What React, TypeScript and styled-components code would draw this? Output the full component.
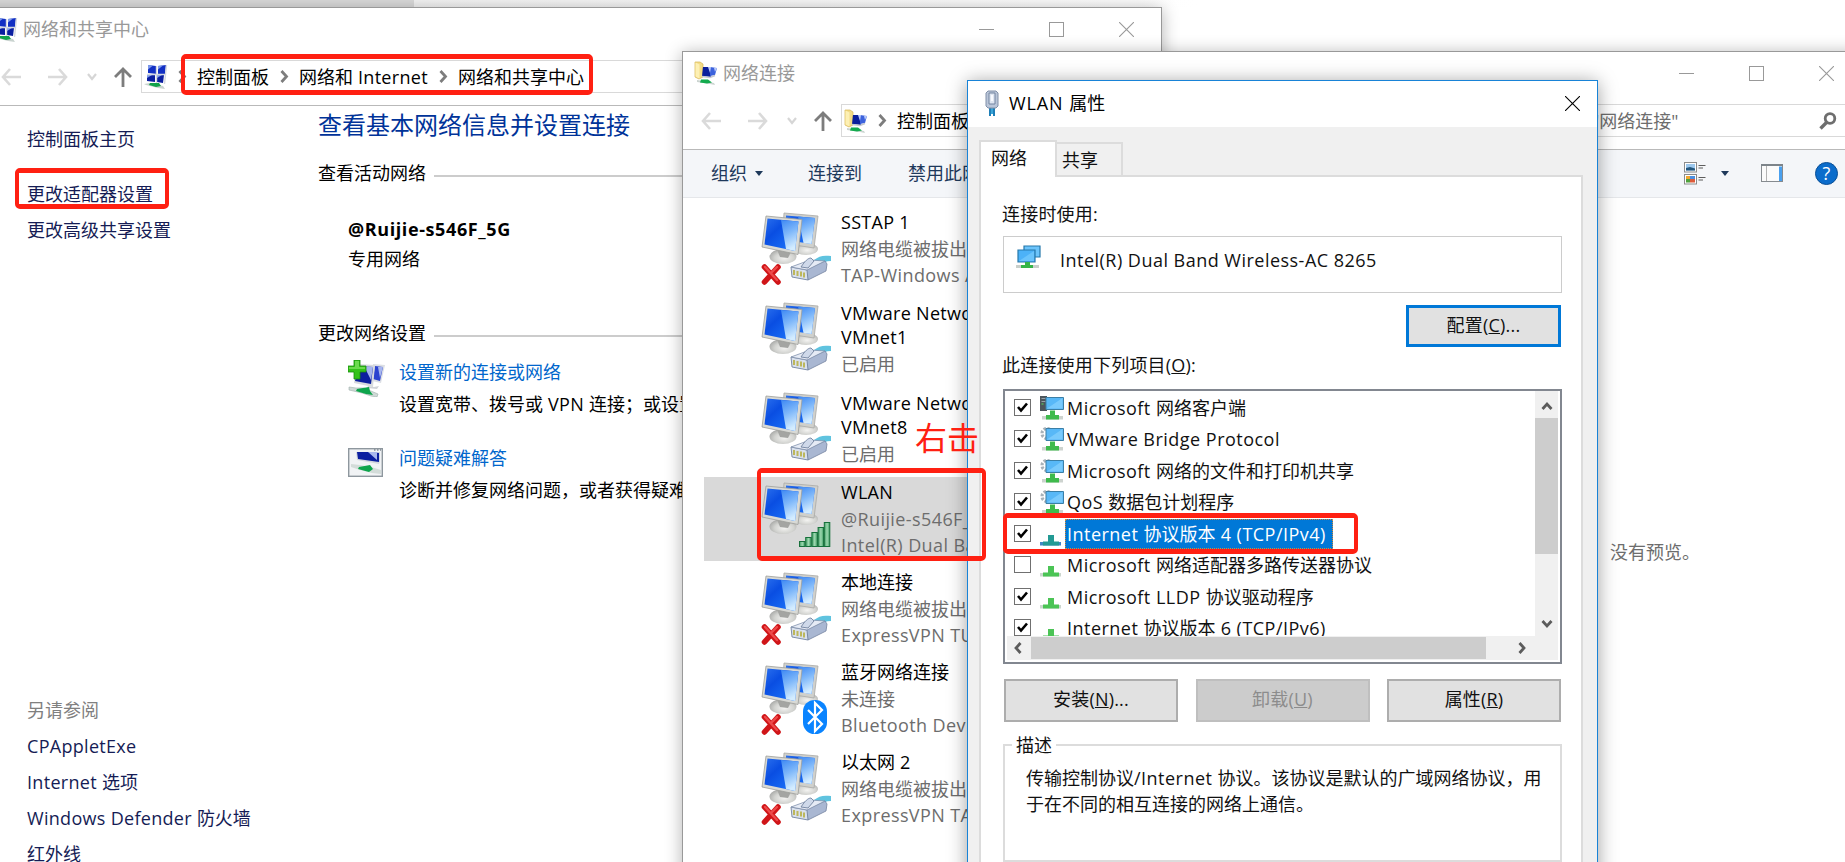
import React from 'react';
import styled, { createGlobalStyle, css } from 'styled-components';

type Overlay = 'plug' | 'signal' | 'bluetooth';
type ItemIcon = 'client' | 'service' | 'protocol';

interface Connection {
  name: string[];
  details: string[];
  overlay: Overlay;
  disconnected?: boolean;
  selected?: boolean;
}

interface BoundItem {
  label: string;
  icon: ItemIcon;
  checked: boolean;
  selected?: boolean;
}

const connections: Connection[] = [
  {
    name: ['SSTAP 1'],
    details: ['网络电缆被拔出', 'TAP-Windows Adapter V9'],
    overlay: 'plug',
    disconnected: true,
  },
  {
    name: ['VMware Network Adapter', 'VMnet1'],
    details: ['已启用'],
    overlay: 'plug',
  },
  {
    name: ['VMware Network Adapter', 'VMnet8'],
    details: ['已启用'],
    overlay: 'plug',
  },
  {
    name: ['WLAN'],
    details: ['@Ruijie-s546F_5G', 'Intel(R) Dual Band Wireless-AC'],
    overlay: 'signal',
    selected: true,
  },
  {
    name: ['本地连接'],
    details: ['网络电缆被拔出', 'ExpressVPN TUN Driver'],
    overlay: 'plug',
    disconnected: true,
  },
  {
    name: ['蓝牙网络连接'],
    details: ['未连接', 'Bluetooth Device (Personal)'],
    overlay: 'bluetooth',
    disconnected: true,
  },
  {
    name: ['以太网 2'],
    details: ['网络电缆被拔出', 'ExpressVPN TAP Adapter'],
    overlay: 'plug',
    disconnected: true,
  },
];

const boundItems: BoundItem[] = [
  { label: 'Microsoft 网络客户端', icon: 'client', checked: true },
  { label: 'VMware Bridge Protocol', icon: 'service', checked: true },
  { label: 'Microsoft 网络的文件和打印机共享', icon: 'service', checked: true },
  { label: 'QoS 数据包计划程序', icon: 'service', checked: true },
  {
    label: 'Internet 协议版本 4 (TCP/IPv4)',
    icon: 'protocol',
    checked: true,
    selected: true,
  },
  {
    label: 'Microsoft 网络适配器多路传送器协议',
    icon: 'protocol',
    checked: false,
  },
  { label: 'Microsoft LLDP 协议驱动程序', icon: 'protocol', checked: true },
  { label: 'Internet 协议版本 6 (TCP/IPv6)', icon: 'protocol', checked: true },
];

const seeAlso = ['CPAppletExe', 'Internet 选项', 'Windows Defender 防火墙', '红外线'];

/* ---------- icons ---------- */

const SharingIcon = () => (
  <svg width="24" height="25" viewBox="1 1 24 25" preserveAspectRatio="none">
    <path d="M5 2l8 1v8l-8-1z M15 3l8-1-1 9-7 0z" fill="#1230c4" />
    <path d="M4 12l8 0v7l-8-1z M14 12l7 0-1 8-6-1z" fill="#0b1fa0" />
    <path d="M5 2l5 .6-5 4z M15 3l5-.6-5 4z M4 12h5l-5 3z M14 12h5l-5 3z" fill="#7f9bea" />
    <path d="M13.500 3v17M4 11.500h18M23.500 2l-2 19" stroke="#d5d9e0" strokeWidth="1.400" />
    <path d="M1 21l6-1 13 3 2 3-7-1-12-3z" fill="#c9d3cf" />
    <path d="M7 20l9 0 2 3-5 1-7-2z" fill="#12a34a" />
  </svg>
);

const FolderNetIcon = () => (
  <svg width="24" height="24" viewBox="0 0 24 24">
    <path d="M1 1h5l3 2v13l-4 2-4-2z" fill="#f3dc88" stroke="#d6b455" strokeWidth=".7" />
    <path d="M1.500 1.500l4 2v14l-4-2z" fill="#fdf0b4" />
    <path d="M9 6l8 0 0 10-9-1z" fill="#0a1f9c" />
    <path d="M16 6l7 1-2 7-5 1z" fill="#3c62dc" />
    <path d="M14 6l3 0-1 6z M20 7l3 0-2 4z" fill="#b8c9fa" />
    <path d="M8 15.500l8 1 5-2" stroke="#c4c8d0" strokeWidth="1.400" fill="none" />
    <path d="M3 19l17 3 1 2-5-1-13-2z" fill="#cbd4d0" />
    <path d="M7 18.500l7 0 4 3-5 1-7-1z" fill="#13ab4e" />
  </svg>
);

const NewConnectionIcon = () => (
  <svg width="37" height="37" viewBox="0 0 37 37">
    <path d="M25 4l12 1-4 18-9-2z" fill="#dcdfe4" />
    <path d="M27 6l8 1-3 14-7-2z" fill="#2c43cf" />
    <path d="M9 4l18 1-2 22L6 23z" fill="#d7dade" />
    <path d="M11 6l14 1-2 17L7 21z" fill="#0c1f9f" />
    <path d="M16 6l9 1-2 13z M30 7l5 0-3 11z" fill="#a7b6ee" />
    <path d="M20 26l6 1 5-1-2 3-10-1z" fill="#d0d3d8" />
    <path d="M1 27l7 1 8 0 14 6-1 3-6-1-9-3-13-3z" fill="#cfd9d6" stroke="#9fb0ab" strokeWidth=".6" />
    <path d="M9 29l12-2 1 4 3 4-7-1-10-3z" fill="#0ea54c" />
    <path d="M6 0h6v6h6v6h-6v7H6v-7H0V6h6z" fill="#35c21a" stroke="#188a0c" strokeWidth=".8" />
    <path d="M7 1h4v6h6v2H1V7h6z" fill="#85e565" opacity=".7" />
  </svg>
);

const TroubleshootIcon = () => (
  <svg width="35" height="29" viewBox="0 0 35 29">
    <rect x=".7" y=".7" width="33.6" height="27.6" fill="#f1f3f5" stroke="#8e979e" strokeWidth="1.4" />
    <path d="M26 2h1.500M29 2h1.500M32 2h1" stroke="#4e5a66" />
    <path d="M8 4h24v9l-1 3L9 12z" fill="#d4d8de" />
    <path d="M9 4h12l10 1v9L10 11z" fill="#0c1fa0" />
    <path d="M20 4h9l0 8z" fill="#aab8ee" />
    <path d="M3 16l9 1 11 2 10 3v4l-9-1-12-3-9-3z" fill="#d3dcd9" />
    <path d="M11 19l11-2 3 4-4 3-11-3z" fill="#0ea54c" />
  </svg>
);

const AdapterIcon = () => (
  <svg width="14" height="26" viewBox="0 0 14 26">
    <path d="M4 15h6v9H4z" fill="#3aa5d8" />
    <path d="M5 17v9M9 17v9" stroke="#1f7fb8" strokeWidth="2" />
    <path d="M3 1h8l2 2v13l-2 2H3l-2-2V3z" fill="#b9c5d8" stroke="#8190a8" />
    <path d="M4 3h6v11H4z" fill="#dfe6f1" stroke="#7384a0" />
    <path d="M7 5v6" stroke="#f8faff" strokeWidth="2" />
  </svg>
);

const BackIcon = () => (
  <svg width="20" height="18" viewBox="0 0 20 18">
    <path d="M9 1L2 9l7 8M2 9h18" fill="none" stroke="#dadada" strokeWidth="2.600" />
  </svg>
);

const ForwardIcon = () => (
  <svg width="20" height="18" viewBox="0 0 20 18">
    <path d="M11 1l7 8-7 8M0 9h18" fill="none" stroke="#dadada" strokeWidth="2.600" />
  </svg>
);

const UpIcon = () => (
  <svg width="18" height="20" viewBox="0 0 18 20">
    <path d="M1 10l8-8 8 8M9 2v18" fill="none" stroke="#7d7d7d" strokeWidth="2.800" />
  </svg>
);

const DownChevron = () => (
  <svg width="10" height="8" viewBox="0 0 10 8">
    <path d="M1 1l4 5 4-5" fill="none" stroke="#d6d6d6" strokeWidth="2.200" />
  </svg>
);

const CrumbChevron = () => (
  <svg width="9" height="13" viewBox="0 0 9 13">
    <path d="M1.500 1l5 5.500-5 5.500" fill="none" stroke="#7d7d7d" strokeWidth="2.800" />
  </svg>
);

const SearchIcon = () => (
  <svg width="18" height="18" viewBox="0 0 18 18">
    <circle cx="11" cy="6.500" r="4.800" fill="none" stroke="#6e6e6e" strokeWidth="2.800" />
    <path d="M7.500 10.500L1.500 16.500" stroke="#6e6e6e" strokeWidth="3.400" />
  </svg>
);

const MinimizeIcon = () => (
  <svg width="15" height="15" viewBox="0 0 15 15">
    <path d="M0 7.500h15" stroke="currentColor" />
  </svg>
);

const MaximizeIcon = () => (
  <svg width="15" height="15" viewBox="0 0 15 15">
    <rect x=".5" y=".5" width="14" height="14" fill="none" stroke="currentColor" />
  </svg>
);

const CloseIcon = () => (
  <svg width="15" height="15" viewBox="0 0 15 15">
    <path d="M0 0l15 15M15 0L0 15" stroke="currentColor" strokeWidth="1.100" />
  </svg>
);

const ViewIcon = () => (
  <svg width="22" height="23" viewBox="0 0 22 23">
    <rect x=".5" y=".5" width="12" height="9.500" fill="#fff" stroke="#8b8b8b" />
    <rect x="2" y="2" width="9" height="6.500" fill="#9cc8ee" />
    <path d="M2 6l4-1 5 1.500v2H2z" fill="#23577e" />
    <rect x=".5" y="12.500" width="12" height="9.500" fill="#fff" stroke="#8b8b8b" />
    <path d="M2 14h4v3H2z" fill="#f0a52c" />
    <path d="M6 14h5v3H6z" fill="#4b8fe0" />
    <path d="M2 17h4v3.500H2z" fill="#4ea13c" />
    <path d="M6 17h5v3.500H6z" fill="#dd5b3a" />
    <path d="M14.500 3.500h7M14.500 6h4.500M14.500 15.500h7M14.500 18h4.500" stroke="#5d5d5d" />
  </svg>
);

const PaneIcon = () => (
  <svg width="22" height="18" viewBox="0 0 22 18">
    <rect x=".5" y=".5" width="21" height="17" fill="#fbfbfb" stroke="#868b90" />
    <path d="M0 1h22" stroke="#7d848a" strokeWidth="2" />
    <path d="M5.500 2v15" stroke="#b4b4b4" />
    <rect x="18" y="2.500" width="3" height="14.500" fill="#4aa0ee" />
  </svg>
);

const Caret = () => (
  <svg width="8" height="5" viewBox="0 0 8 5">
    <path d="M0 0h8L4 5z" fill="#1e395b" />
  </svg>
);

const WiredIcon = () => (
  <svg width="25" height="24" viewBox="0 0 25 24">
    <path d="M8 1h16v11H8z" fill="#6cc4fb" stroke="#2678ab" strokeWidth="1.200" />
    <path d="M2 5h17v12H2z" fill="#4cb2f8" stroke="#2678ab" strokeWidth="1.200" />
    <path d="M3 16L18 6v10z" fill="#7fd0ff" opacity=".6" />
    <path d="M0 20h23v3H0z" fill="#c9cfcb" />
    <path d="M9 17h5v3h3v3H5v-3h4z" fill="#36b548" />
  </svg>
);

const BoundIcon = ({ kind, active }: { kind: ItemIcon; active?: boolean }) => (
  <svg width="24" height="26" viewBox="0 0 24 26">
    {kind === 'client' && (
      <>
        <path d="M0 1h7v15H0z" fill="#4d565c" />
        <path d="M1.500 3.500h4M1.500 6.500h4" stroke="#98a3aa" />
        <path d="M1.500 9h2" stroke="#59e05a" />
      </>
    )}
    {kind === 'service' && (
      <circle
        cx="7"
        cy="7.500"
        r="5"
        fill="none"
        stroke="#a7b1b8"
        strokeWidth="3.200"
        strokeDasharray="2.400 1.500"
      />
    )}
    {kind === 'protocol' ? (
      <>
        <path d="M0 21h21v3.500H0z" fill={active ? '#3f87c4' : '#ccd6cf'} />
        <path d="M8 14h6v6.500h5v4H3v-4h5z" fill={active ? '#239a94' : '#4bc455'} />
      </>
    ) : (
      <>
        <path d="M6 2.500h17.500v12H6z" fill="#58b8f7" stroke="#3b7fa6" />
        <path d="M7 13.500L22.500 3v10.500z" fill="#8fd5ff" opacity=".6" />
        <path d="M2 21h21v3.500H2z" fill="#cdd3cf" />
        <path d="M10 15.500h5v4.500h4v4.500H6v-4.500h4z" fill="#3fba4c" />
      </>
    )}
  </svg>
);

const ConnectionIcon = ({ overlay, disconnected }: { overlay: Overlay; disconnected?: boolean }) => (
  <svg width="70" height="84" viewBox="0 0 70 84" overflow="visible">
    <defs>
      <linearGradient id="screen" x1="0" y1="0" x2="1" y2="1">
        <stop offset="0" stopColor="#2a70ee" />
        <stop offset=".35" stopColor="#0a4ee2" />
        <stop offset="1" stopColor="#1f7cff" />
      </linearGradient>
      <linearGradient id="shine" x1="0" y1="0" x2=".3" y2="1">
        <stop offset="0" stopColor="#3d88f3" />
        <stop offset=".5" stopColor="#7fb8fa" />
        <stop offset="1" stopColor="#d3ecff" />
      </linearGradient>
      <radialGradient id="base" cx=".55" cy=".6" r=".6">
        <stop offset="0" stopColor="#f4f4f2" />
        <stop offset=".6" stopColor="#d2d3d0" />
        <stop offset="1" stopColor="#a9aaa8" />
      </radialGradient>
      <linearGradient id="bar" x1="0" y1="0" x2="1" y2="0">
        <stop offset="0" stopColor="#3e9c62" />
        <stop offset=".5" stopColor="#9ed8b0" />
        <stop offset="1" stopColor="#3e9c62" />
      </linearGradient>
    </defs>
    <ellipse cx="44" cy="42" rx="12" ry="6" fill="url(#base)" />
    <path d="M22 6l34 3-4 32-32-5z" fill="#cfd0cc" stroke="#a9aaa7" strokeWidth=".8" />
    <path d="M24 8.500l29 2.500-3.500 26L24 33z" fill="url(#screen)" />
    <path d="M36 9.500l17 1.500-3.500 26-8-1z" fill="url(#shine)" />
    <ellipse cx="21" cy="49.500" rx="13.500" ry="7.500" fill="url(#base)" />
    <path d="M14 40l16 3-4 8-8-1z" fill="#a4a5a2" />
    <path d="M4 9l36 3.500-4 35L0 40z" fill="#d8d9d5" stroke="#9d9e9b" strokeWidth=".8" />
    <path d="M5.500 11.500l31 3-3.500 29.500L2.500 37.500z" fill="url(#screen)" />
    <path d="M19 13l17.500 1.500-3.500 29.500-9-2z" fill="url(#shine)" />
    {disconnected && (
      <g>
        <path d="M2.500 60l13.500 15M16 60L2.500 75" stroke="#d01518" strokeWidth="5.600" strokeLinecap="round" />
        <path d="M3 60l12 13M15 60l-5 5" stroke="#ee4a4a" strokeWidth="2.400" strokeLinecap="round" />
      </g>
    )}
    {overlay === 'plug' && (
      <g>
        <path d="M52 53c5-4 9-5 17-4v5c-5 0-9 2-14 5z" fill="#5fc3df" />
        <path d="M44 63l19-9 2 3-1 7-18 9z" fill="#a9b7d2" stroke="#73839f" strokeWidth=".8" />
        <path d="M29 60l16 3 1 10-16-3z" fill="#d9e0ec" stroke="#73839f" strokeWidth=".9" />
        <path d="M29 60l19-7 15 1-18 9z" fill="#e6ebf5" stroke="#8090ac" strokeWidth=".8" />
        <path d="M32 63v5M35.500 64v5M39 64.500v5M42 65.500v5" stroke="#bdb75c" strokeWidth="2" />
        <path d="M39 60c4-6 7-9 10-9l3 3-6 7z" fill="#cfd9ea" stroke="#73839f" strokeWidth=".9" />
      </g>
    )}
    {overlay === 'signal' &&
      [5, 9, 14, 19, 24].map((height, index) => (
        <rect
          key={height}
          x={37.5 + index * 6.2}
          y={69.5 - height}
          width="5.500"
          height={height}
          fill="url(#bar)"
          stroke="#17703b"
        />
      ))}
    {overlay === 'bluetooth' && (
      <g>
        <rect x="41" y="43" width="24" height="34" rx="11.500" fill="#0a84ff" />
        <path d="M46 53l14 14-7 7V46l7 7-14 14" fill="none" stroke="#fff" strokeWidth="2.200" />
      </g>
    )}
  </svg>
);

const ScrollArrow = ({ d }: { d: string }) => (
  <svg width="12" height="12" viewBox="0 0 12 12">
    <path d={d} fill="none" stroke="#5c5c5c" strokeWidth="2.800" />
  </svg>
);

const mixed = (text: string) =>
  text
    .split(/([\x20-\x7e]+)/)
    .filter(Boolean)
    .map((run, index) => (/^[\x20-\x7e]+$/.test(run) ? <Latin key={index}>{run}</Latin> : run));

const WindowButtons = () => (
  <ButtonStrip>
    <CaptionButton>
      <MinimizeIcon />
    </CaptionButton>
    <CaptionButton>
      <MaximizeIcon />
    </CaptionButton>
    <CaptionButton>
      <CloseIcon />
    </CaptionButton>
  </ButtonStrip>
);

const NavButtons = () => (
  <NavGroup>
    <BackIcon />
    <ForwardIcon />
    <DownChevron />
    <UpIcon />
  </NavGroup>
);

const SharingCenter = () => (
  <Window $left={-18} $top={7}>
    <TitleBar>
      <SharingIcon />
      <WindowTitle>网络和共享中心</WindowTitle>
      <WindowButtons />
    </TitleBar>
    <NavBar>
      <NavButtons />
      <AddressBox>
        <SharingIcon />
        <CrumbChevron />
        <Crumb>控制面板</Crumb>
        <CrumbChevron />
        <Crumb>{mixed('网络和 Internet')}</Crumb>
        <CrumbChevron />
        <Crumb>网络和共享中心</Crumb>
      </AddressBox>
    </NavBar>
    <SharingBody>
      <Sidebar>
        <SideLink>控制面板主页</SideLink>
        <TaskLinks>
          <SideLink>更改适配器设置</SideLink>
          <SideLink>更改高级共享设置</SideLink>
        </TaskLinks>
        <SeeAlso>
          <SeeAlsoTitle>另请参阅</SeeAlsoTitle>
          {seeAlso.map((item) => (
            <SideLink key={item}>{mixed(item)}</SideLink>
          ))}
        </SeeAlso>
      </Sidebar>
      <Main>
        <Heading>查看基本网络信息并设置连接</Heading>
        <SectionTitle $gap={17}>查看活动网络</SectionTitle>
        <ActiveNetwork>
          <strong>@Ruijie-s546F_5G</strong>
          <span>专用网络</span>
        </ActiveNetwork>
        <SectionTitle $gap={48}>更改网络设置</SectionTitle>
        <SettingRow>
          <NewConnectionIcon />
          <div>
            <SettingLink>设置新的连接或网络</SettingLink>
            <SettingText>{mixed('设置宽带、拨号或 VPN 连接；或设置路由器或接入点。')}</SettingText>
          </div>
        </SettingRow>
        <SettingRow>
          <TroubleshootIcon />
          <div>
            <SettingLink>问题疑难解答</SettingLink>
            <SettingText>诊断并修复网络问题，或者获得疑难解答信息。</SettingText>
          </div>
        </SettingRow>
      </Main>
    </SharingBody>
  </Window>
);

const ConnectionsWindow = () => (
  <Window $left={682} $top={51}>
    <TitleBar>
      <FolderNetIcon />
      <WindowTitle>网络连接</WindowTitle>
      <WindowButtons />
    </TitleBar>
    <NavBar>
      <NavButtons />
      <AddressBox>
        <FolderNetIcon />
        <CrumbChevron />
        <Crumb>控制面板</Crumb>
      </AddressBox>
      <SearchBox>
        <span>搜索"网络连接"</span>
        <SearchIcon />
      </SearchBox>
    </NavBar>
    <Toolbar>
      <ToolButton $width={97}>
        组织 <Caret />
      </ToolButton>
      <ToolButton $width={100}>连接到</ToolButton>
      <ToolButton $width={140}>禁用此网络设备</ToolButton>
      <ToolIcons>
        <ViewIcon />
        <Caret />
        <PaneIcon />
        <HelpBadge>?</HelpBadge>
      </ToolIcons>
    </Toolbar>
    <ConnectionsBody>
      <ConnectionList>
        {connections.map((item, index) => (
          <ConnectionItem key={index} $selected={item.selected}>
            <ConnectionIcon overlay={item.overlay} disconnected={item.disconnected} />
            <ConnectionText $single={item.name.length === 1}>
              {item.name.map((line) => (
                <NameLine key={line}>{mixed(line)}</NameLine>
              ))}
              <Details>
                {item.details.map((line) => (
                  <DetailLine key={line}>{mixed(line)}</DetailLine>
                ))}
              </Details>
            </ConnectionText>
          </ConnectionItem>
        ))}
      </ConnectionList>
      <PreviewPane>没有预览。</PreviewPane>
    </ConnectionsBody>
  </Window>
);

const PropertiesDialog = () => (
  <Dialog>
    <DialogTitle>
      <AdapterIcon />
      <DialogCaption>{mixed('WLAN 属性')}</DialogCaption>
      <CloseIcon />
    </DialogTitle>
    <DialogBody>
      <TabStrip>
        <Tab $active>网络</Tab>
        <Tab>共享</Tab>
      </TabStrip>
      <TabPage>
        <Label $gap={25}>连接时使用:</Label>
        <DeviceBox>
          <WiredIcon />
          <DeviceName>{mixed('Intel(R) Dual Band Wireless-AC 8265')}</DeviceName>
        </DeviceBox>
        <ConfigureButton>
          配置(<u>C</u>)...
        </ConfigureButton>
        <Label $gap={6}>
          此连接使用下列项目(<u>O</u>):
        </Label>
        <ListBox>
          <ItemRows>
            {boundItems.map((item) => (
              <ItemRow key={item.label}>
                <CheckBox>
                  {item.checked && (
                    <svg width="11" height="11" viewBox="0 0 11 11">
                      <path d="M1 5l3 3.500L10 1.500" fill="none" stroke="#000" strokeWidth="2.600" />
                    </svg>
                  )}
                </CheckBox>
                <BoundIcon kind={item.icon} active={item.selected} />
                <ItemLabel $selected={item.selected}>{mixed(item.label)}</ItemLabel>
              </ItemRow>
            ))}
          </ItemRows>
          <VerticalScroll>
            <ScrollArrow d="M1.500 9L6 4l4.500 5" />
            <VerticalThumb />
            <ScrollArrow d="M1.500 3L6 8l4.500-5" />
          </VerticalScroll>
          <HorizontalScroll>
            <ScrollArrow d="M8.500 1L4 6l4.500 5" />
            <HorizontalThumb />
            <ScrollArrow d="M3.500 1L8 6l-4.500 5" />
          </HorizontalScroll>
        </ListBox>
        <ButtonRow>
          <PushButton>
            安装(<u>N</u>)...
          </PushButton>
          <PushButton $disabled>
            卸载(<u>U</u>)
          </PushButton>
          <PushButton>
            属性(<u>R</u>)
          </PushButton>
        </ButtonRow>
        <DescriptionGroup>
          <legend>描述</legend>
          <p>{mixed('传输控制协议/Internet 协议。该协议是默认的广域网络协议，用')}</p>
          <p>于在不同的相互连接的网络上通信。</p>
        </DescriptionGroup>
      </TabPage>
    </DialogBody>
  </Dialog>
);

const App: React.FC = () => {
  return (
    <Desktop>
      <GlobalStyle />
      <BackStrip />
      <SharingCenter />
      <ConnectionsWindow />
      <PropertiesDialog />
      <Marker $x={181} $y={54} $w={412} $h={41} />
      <Marker $x={15} $y={168} $w={154} $h={41} />
      <Marker $x={757} $y={468} $w={229} $h={93} />
      <Marker $x={1003} $y={513} $w={355} $h={41} />
      <MarkerText>右击</MarkerText>
    </Desktop>
  );
};
export default App;

const GlobalStyle = createGlobalStyle`
  * {
    box-sizing: border-box;
  }

  body {
    margin: 0;
    overflow: hidden;
  }

  svg {
    flex: none;
    display: block;
  }
`;

const Desktop = styled.div`
  position: relative;
  width: 1845px;
  height: 862px;
  overflow: hidden;
  background: #fff;
  color: #000;
  font-family: 'Open Sans', 'Noto Sans CJK SC', sans-serif;
  font-size: 18px;
  line-height: 24px;
  white-space: nowrap;
`;

const Latin = styled.span`
  letter-spacing: 0.3px;
  white-space: pre;
`;

const BackStrip = styled.div`
  height: 8px;
  background: linear-gradient(90deg, #dcdcdc 414px, #f5f5f5 414px, #fff 1200px);
`;

const Window = styled.section<{ $left: number; $top: number }>`
  position: absolute;
  left: ${({ $left }) => $left}px;
  top: ${({ $top }) => $top}px;
  width: 1180px;
  height: 900px;
  display: flex;
  flex-direction: column;
  background: #fff;
  border: 1px solid #999;
  box-shadow: 0 2px 16px rgba(0, 0, 0, 0.3);
`;

const TitleBar = styled.header`
  display: flex;
  align-items: center;
  flex: none;
  height: 42px;
  padding-left: 11px;
`;

const WindowTitle = styled.span`
  margin-left: 5px;
  color: #999;
`;

const ButtonStrip = styled.div`
  display: flex;
  margin-left: auto;
  color: #999;
`;

const CaptionButton = styled.div`
  width: 70px;
  padding-left: 28px;
`;

const NavBar = styled.nav`
  display: flex;
  align-items: center;
  flex: none;
  height: 56px;
  padding: 0 14px 2px 18px;
  border-bottom: 1px solid #b9b9b9;
`;

const NavGroup = styled.div`
  display: flex;
  align-items: center;
  width: 140px;

  svg:nth-child(2) {
    margin-left: 27px;
  }

  svg:nth-child(3) {
    margin-left: 19px;
  }

  svg:nth-child(4) {
    margin-left: 17px;
  }
`;

const AddressBox = styled.div`
  display: flex;
  align-items: center;
  flex: 1;
  gap: 10px;
  height: 33px;
  padding-left: 2px;
  border: 1px solid #d9d9d9;
`;

const Crumb = styled.span`
  margin-right: 1px;
`;

const SearchBox = styled.div`
  display: flex;
  align-items: center;
  justify-content: space-between;
  width: 300px;
  height: 33px;
  margin-left: 14px;
  padding: 0 9px 0 8px;
  border: 1px solid #d9d9d9;
  color: #6d6d6d;
`;

const SharingBody = styled.div`
  display: flex;
  flex: 1;
`;

const Sidebar = styled.aside`
  width: 335px;
  padding: 15px 0 0 44px;
  line-height: 36px;
  color: #151c55;
`;

const SideLink = styled.div`
  height: 36px;
`;

const TaskLinks = styled.div`
  margin-top: 19px;
`;

const SeeAlso = styled.div`
  margin-top: 444px;
`;

const SeeAlsoTitle = styled.div`
  height: 36px;
  color: #808080;
`;

const Main = styled.main`
  flex: 1;
`;

const Heading = styled.h1`
  margin: 0;
  font-size: 24px;
  font-weight: 400;
  line-height: 38px;
  color: #003399;
`;

const SectionTitle = styled.h2<{ $gap: number }>`
  display: flex;
  align-items: center;
  gap: 8px;
  margin: ${({ $gap }) => $gap}px 0 0;
  font-size: 18px;
  font-weight: 400;

  &::after {
    content: '';
    flex: 1;
    height: 2px;
    margin-top: 5px;
    background: #ccc;
  }
`;

const ActiveNetwork = styled.div`
  display: flex;
  flex-direction: column;
  gap: 2px;
  margin-top: 30px;
  padding-left: 30px;
  line-height: 28px;

  strong {
    font-weight: 700;
    letter-spacing: 0.6px;
  }
`;

const SettingRow = styled.div`
  display: flex;
  margin-top: 15px;
  padding-left: 30px;

  > div {
    margin-left: 14px;
  }

  & + & {
    margin-top: 32px;
  }

  & + & > div {
    margin: -2px 0 0 16px;
  }
`;

const SettingLink = styled.div`
  color: #0066cc;
`;

const SettingText = styled.div`
  margin-top: 8px;
`;

const Toolbar = styled.div`
  display: flex;
  align-items: center;
  flex: none;
  height: 48px;
  padding: 0 23px 1px 28px;
  background: #f4f6f9;
  border-bottom: 1px solid #e5e7ea;
  color: #1e395b;
`;

const ToolButton = styled.div<{ $width: number }>`
  display: flex;
  align-items: center;
  gap: 8px;
  width: ${({ $width }) => $width}px;
`;

const ToolIcons = styled.div`
  display: flex;
  align-items: center;
  margin-left: auto;
  gap: 32px;

  svg:nth-child(2) {
    margin-left: -17px;
  }
`;

const HelpBadge = styled.div`
  width: 23px;
  height: 23px;
  border: 1px solid #0a4f96;
  border-radius: 50%;
  background: #0b6ccb;
  color: #fff;
  line-height: 20px;
  text-align: center;
`;

const ConnectionsBody = styled.div`
  display: flex;
  flex: 1;
  padding: 9px 0 0 21px;
`;

const ConnectionList = styled.div`
  flex: 1;
  display: flex;
  flex-direction: column;
  gap: 6px;
`;

const ConnectionItem = styled.div<{ $selected?: boolean }>`
  display: flex;
  flex: none;
  width: 330px;
  height: 84px;
  padding-left: 58px;
  background: ${({ $selected }) => ($selected ? '#d9d9d9' : 'transparent')};
`;

const ConnectionText = styled.div<{ $single: boolean }>`
  margin-left: 9px;
  padding-top: ${({ $single }) => ($single ? 3 : 4)}px;
`;

const NameLine = styled.div`
  height: 24px;
`;

const Details = styled.div`
  padding-top: 3px;
  color: #6d6d6d;

  ${Latin} {
    letter-spacing: 0.4px;
  }
`;

const DetailLine = styled.div`
  height: 26px;
`;

const PreviewPane = styled.div`
  width: 251px;
  padding-top: 333px;
  color: #6d6d6d;
`;

const Dialog = styled.section`
  position: absolute;
  left: 967px;
  top: 80px;
  width: 631px;
  height: 860px;
  background: #f0f0f0;
  border: 1px solid #1883d7;
  box-shadow: 0 2px 18px rgba(0, 0, 0, 0.38);
`;

const DialogTitle = styled.header`
  display: flex;
  align-items: center;
  height: 46px;
  padding: 0 17px 2px;
  background: #fff;
`;

const DialogCaption = styled.span`
  margin: 0 auto 0 10px;

  ${Latin} {
    letter-spacing: 0.9px;
  }
`;

const DialogBody = styled.div`
  padding: 13px 14px 0 11px;
  color: #111;

  ${Latin} {
    letter-spacing: 0.48px;
  }
`;

const TabStrip = styled.div`
  display: flex;
  align-items: flex-end;
`;

const Tab = styled.div<{ $active?: boolean }>`
  width: 66px;
  height: 33px;
  padding: 4px 0 0 5px;
  border: 2px solid #dcdcdc;
  border-bottom: 0;
  border-left: 0;
  ${({ $active }) =>
    $active &&
    css`
      z-index: 1;
      width: 78px;
      height: 37px;
      margin-bottom: -2px;
      padding-left: 10px;
      background: #fff;
      border-left: 2px solid #dcdcdc;
    `}
`;

const TabPage = styled.div`
  display: flex;
  flex-direction: column;
  height: 740px;
  padding: 0 19px 0 22px;
  background: #fff;
  border: 2px solid #dcdcdc;
`;

const Label = styled.div<{ $gap: number }>`
  height: 24px;
  margin-top: ${({ $gap }) => $gap}px;
  margin-left: -1px;
  letter-spacing: 0.2px;
`;

const DeviceBox = styled.div`
  display: flex;
  flex: none;
  height: 57px;
  margin-top: 10px;
  padding: 8px 0 0 12px;
  border: 1.5px solid #ccc;
`;

const DeviceName = styled.span`
  margin: 3px 0 0 19px;
`;

const PushButton = styled.div<{ $disabled?: boolean }>`
  flex: none;
  width: 174px;
  height: 43px;
  border: 2px solid ${({ $disabled }) => ($disabled ? '#bfbfbf' : '#adadad')};
  background: ${({ $disabled }) => ($disabled ? '#ccc' : '#e1e1e1')};
  color: ${({ $disabled }) => ($disabled ? '#8c8c8c' : '#111')};
  letter-spacing: 0.2px;
  line-height: 37px;
  text-align: center;
`;

const ConfigureButton = styled(PushButton)`
  width: 155px;
  height: 42px;
  margin: 12px 1px 0 auto;
  border: 3px solid #0078d7;
  line-height: 35px;
`;

const ListBox = styled.div`
  flex: none;
  display: grid;
  grid-template-columns: 1fr 23px;
  grid-template-rows: 245px 1fr;
  height: 275px;
  margin-top: 12px;
  padding: 0 2px 2px;
  border: 2px solid #828790;
`;

const ItemRows = styled.div`
  padding-top: 1px;
  overflow: hidden;
`;

const ItemRow = styled.div`
  display: flex;
  align-items: center;
  height: 31.5px;
  padding-left: 7px;
`;

const CheckBox = styled.div`
  display: flex;
  align-items: center;
  justify-content: center;
  width: 17px;
  height: 17px;
  margin: 0 9px 1px 0;
  border: 1.5px solid #707070;
  background: #fff;
`;

const ItemLabel = styled.span<{ $selected?: boolean }>`
  height: 30px;
  margin-left: 1px;
  padding: 2px 7px 0 2px;
  line-height: 27px;
  ${({ $selected }) =>
    $selected &&
    css`
      background: #0078d7;
      color: #fff;
      outline: 1px dotted #d58a3c;
      outline-offset: -1px;
    `}
`;

const VerticalScroll = styled.div`
  display: flex;
  flex-direction: column;
  align-items: center;
  justify-content: space-between;
  padding: 9px 0 6px;
  background: #f0f0f0;
`;

const VerticalThumb = styled.div`
  width: 23px;
  height: 136px;
  margin: 6px 0 auto;
  background: #cdcdcd;
`;

const HorizontalScroll = styled.div`
  grid-column: 1 / 3;
  display: flex;
  align-items: center;
  padding-left: 5px;
  background: #f0f0f0;
`;

const HorizontalThumb = styled.div`
  width: 455px;
  height: 22px;
  margin: 0 30px 0 7px;
  background: #cdcdcd;
`;

const ButtonRow = styled.div`
  display: flex;
  justify-content: space-between;
  margin-top: 15px;
  padding: 0 1px;
`;

const DescriptionGroup = styled.fieldset`
  flex: none;
  height: 129px;
  margin: 11px 0 0;
  padding: 8px 0 0 21px;
  border: 2px solid #dcdcdc;

  legend {
    margin-left: -14px;
    padding: 0 4px;
  }

  p {
    margin: 0;
    line-height: 26px;
  }
`;

const Marker = styled.div<{ $x: number; $y: number; $w: number; $h: number }>`
  position: absolute;
  left: ${({ $x }) => $x}px;
  top: ${({ $y }) => $y}px;
  width: ${({ $w }) => $w}px;
  height: ${({ $h }) => $h}px;
  border: solid #ff2012;
  border-width: 5px 4px;
  border-radius: 5px;
`;

const MarkerText = styled.div`
  position: absolute;
  left: 915px;
  top: 418px;
  color: #ff2012;
  font-size: 32px;
  line-height: 40px;
`;
